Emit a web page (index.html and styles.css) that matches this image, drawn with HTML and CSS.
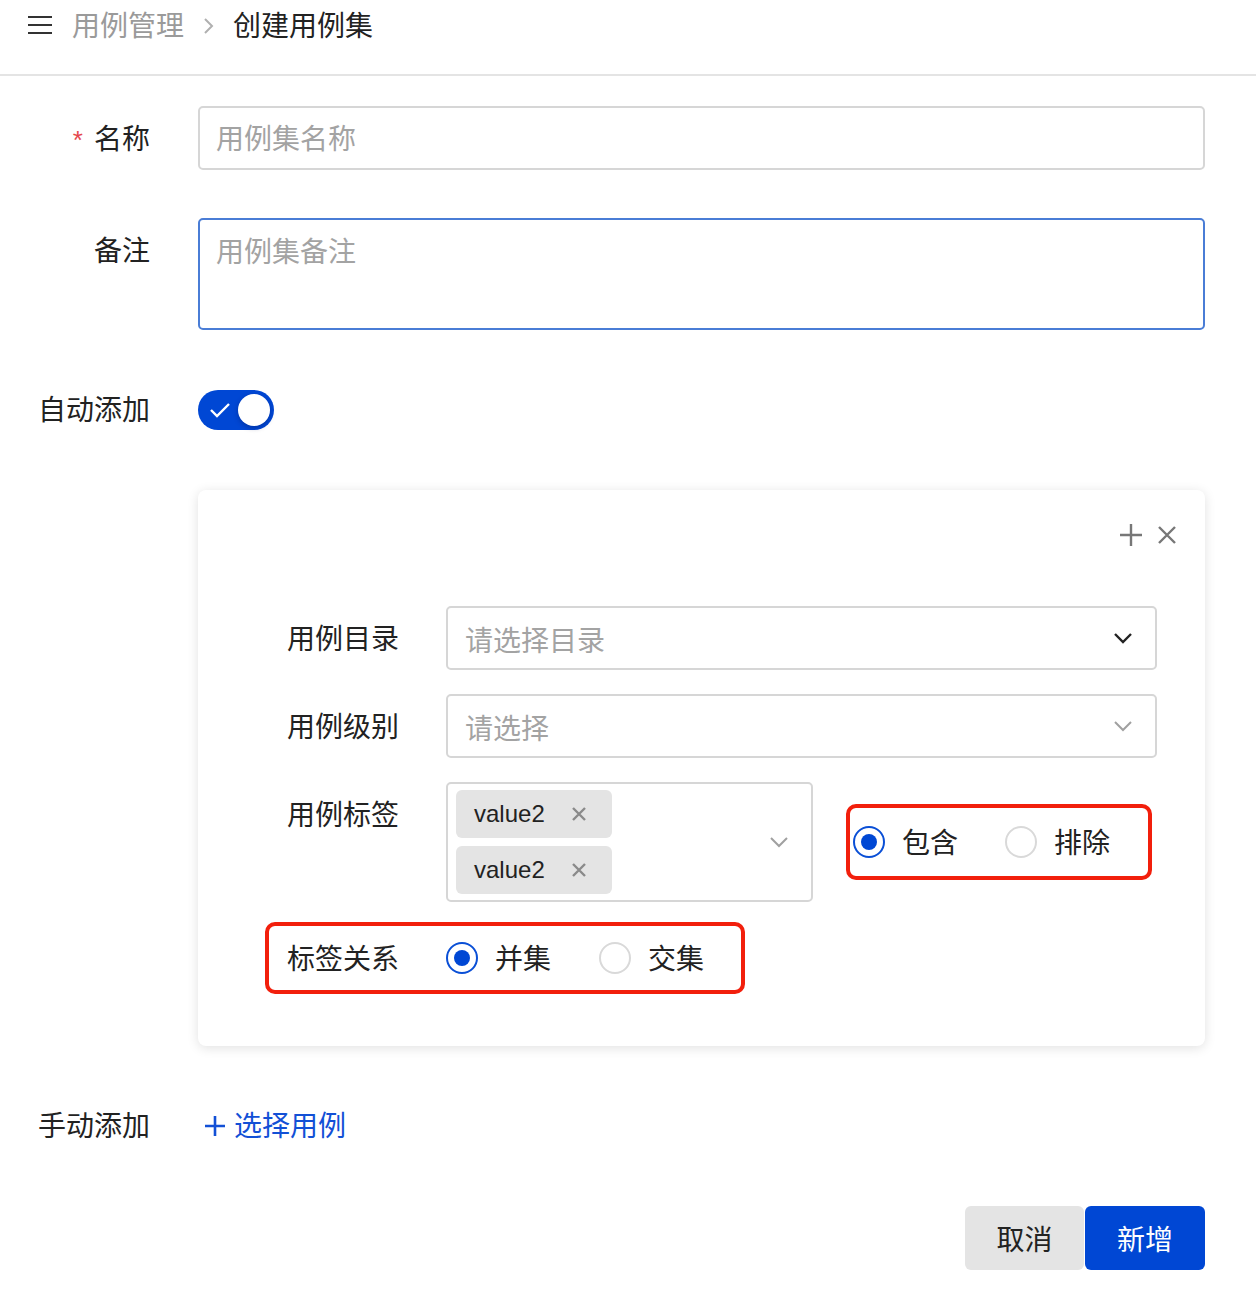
FILE: index.html
```html
<!DOCTYPE html>
<html lang="zh-CN">
<head>
<meta charset="utf-8">
<title>创建用例集</title>
<link rel="stylesheet" href="styles.css">
</head>
<body>
<header class="header">
  <svg class="menu-icon" width="24" height="20" viewBox="0 0 24 20"><path d="M0 2h24M0 10h24M0 18h24" stroke="#333" stroke-width="2" fill="none"/></svg>
  <span class="crumb">用例管理</span>
  <svg class="crumb-sep" width="12" height="18" viewBox="0 0 12 18"><path d="M2 2l7 7-7 7" stroke="#b0b0b0" stroke-width="2" fill="none"/></svg>
  <span class="crumb-current">创建用例集</span>
</header>

<main class="form">
  <div class="row row-name">
    <label class="label"><span class="req">*</span>名称</label>
    <div class="input"><span class="placeholder">用例集名称</span></div>
  </div>

  <div class="row row-note">
    <label class="label">备注</label>
    <div class="textarea"><span class="placeholder">用例集备注</span></div>
  </div>

  <div class="row row-toggle">
    <label class="label">自动添加</label>
    <div class="switch">
      <svg class="switch-check" width="22" height="16" viewBox="0 0 22 16"><path d="M2 8l6 6L20 2" stroke="#fff" stroke-width="2.4" fill="none"/></svg>
      <span class="switch-knob"></span>
    </div>
  </div>

  <div class="card-wrap">
    <section class="card">
      <div class="card-tools">
        <svg width="22" height="22" viewBox="0 0 22 22"><path d="M11 0v22M0 11h22" stroke="#777" stroke-width="2.4" fill="none"/></svg>
        <svg width="18" height="18" viewBox="0 0 18 18"><path d="M1 1l16 16M17 1L1 17" stroke="#777" stroke-width="2.4" fill="none"/></svg>
      </div>

      <div class="inner-row">
        <span class="inner-label">用例目录</span>
        <div class="select">
          <span class="placeholder">请选择目录</span>
          <svg class="chev" width="18" height="11" viewBox="0 0 18 11"><path d="M1 1l8 8 8-8" stroke="#222" stroke-width="2.4" fill="none"/></svg>
        </div>
      </div>

      <div class="inner-row">
        <span class="inner-label">用例级别</span>
        <div class="select">
          <span class="placeholder">请选择</span>
          <svg class="chev" width="18" height="11" viewBox="0 0 18 11"><path d="M1 1l8 8 8-8" stroke="#a0a0a0" stroke-width="2" fill="none"/></svg>
        </div>
      </div>

      <div class="inner-row inner-row-tags">
        <span class="inner-label">用例标签</span>
        <div class="tag-select">
          <div class="tags">
            <span class="tag">value2<svg width="14" height="14" viewBox="0 0 14 14"><path d="M1 1l12 12M13 1L1 13" stroke="#8a8a8a" stroke-width="2.4" fill="none"/></svg></span>
            <span class="tag">value2<svg width="14" height="14" viewBox="0 0 14 14"><path d="M1 1l12 12M13 1L1 13" stroke="#8a8a8a" stroke-width="2.4" fill="none"/></svg></span>
          </div>
          <svg class="chev" width="18" height="11" viewBox="0 0 18 11"><path d="M1 1l8 8 8-8" stroke="#a0a0a0" stroke-width="2" fill="none"/></svg>
        </div>
        <div class="highlight highlight-mode">
          <span class="radio-item"><span class="radio checked"></span><span class="radio-text">包含</span></span>
          <span class="radio-item"><span class="radio"></span><span class="radio-text">排除</span></span>
        </div>
      </div>

      <div class="highlight highlight-relation">
        <span class="inner-label">标签关系</span>
        <span class="radio-item"><span class="radio checked"></span><span class="radio-text">并集</span></span>
        <span class="radio-item"><span class="radio"></span><span class="radio-text">交集</span></span>
      </div>
    </section>
  </div>

  <div class="row row-manual">
    <label class="label">手动添加</label>
    <a class="link">
      <svg width="22" height="22" viewBox="0 0 22 22"><path d="M11 1v20M1 11h20" stroke="#1250d6" stroke-width="2.6" fill="none"/></svg>
      <span class="link-text">选择用例</span>
    </a>
  </div>

  <div class="footer">
    <button class="btn btn-cancel">取消</button>
    <button class="btn btn-primary">新增</button>
  </div>
</main>
</body>
</html>
```

FILE: styles.css
```css
* { box-sizing: border-box; }

body {
  margin: 0;
  background: #fff;
  color: #222;
  font-family: "Liberation Sans", "Noto Sans CJK SC", sans-serif;
  font-size: 28px;
}

.header {
  height: 76px;
  border-bottom: 2px solid #e4e4e4;
  display: flex;
  align-items: flex-start;
  padding: 5px 0 0 28px;
}
.menu-icon { margin-top: 10px; }
.crumb {
  margin-left: 20px;
  padding-top: 2px;
  line-height: 40px;
  color: #9a9a9a;
}
.crumb-sep { margin: 12px 0 0 19px; }
.crumb-current {
  margin-left: 18px;
  padding-top: 2px;
  line-height: 40px;
  color: #222;
}

.form { padding: 30px 51px 0 0; }

.row {
  display: flex;
  gap: 48px;
}
.label {
  flex: 0 0 150px;
  text-align: right;
  height: 64px;
  padding-top: 4px;
  line-height: 60px;
  white-space: nowrap;
}
.req {
  color: #e5484d;
  margin-right: 11px;
  font-size: 26px;
}

.row-name { margin-bottom: 48px; }
.row-note { margin-bottom: 60px; }
.row-toggle { align-items: center; margin-bottom: 60px; }
.row-toggle .label { height: 40px; padding-top: 2px; line-height: 38px; }

.input {
  flex: 1;
  height: 64px;
  border: 2px solid #d6d6d6;
  border-radius: 5px;
  padding: 3px 16px 0;
  line-height: 57px;
}
.textarea {
  flex: 1;
  height: 112px;
  border: 2px solid #4a7dd6;
  border-radius: 5px;
  padding: 13px 16px;
  line-height: 40px;
}
.placeholder { color: #a3a3a3; }

.switch {
  width: 76px;
  height: 40px;
  border-radius: 20px;
  background: #0047d4;
  display: flex;
  align-items: center;
  justify-content: space-between;
  padding: 0 4px 0 11px;
}
.switch-knob {
  width: 32px;
  height: 32px;
  border-radius: 50%;
  background: #fff;
  box-shadow: 0 2px 5px rgba(0, 20, 80, 0.35);
}

.card-wrap {
  padding-left: 198px;
  margin-bottom: 60px;
}
.card {
  background: #fff;
  border-radius: 8px;
  box-shadow: 0 2px 12px rgba(0, 0, 0, 0.12);
  padding: 33px 48px 52px 67px;
}
.card-tools {
  display: flex;
  justify-content: flex-end;
  align-items: center;
  gap: 16px;
  height: 24px;
  margin: 0 -19px 59px 0;
}

.inner-row {
  display: flex;
  align-items: center;
  gap: 47px;
  padding-left: 22px;
  margin-bottom: 24px;
}
.inner-label {
  flex: 0 0 112px;
  white-space: nowrap;
  height: 40px;
  padding-top: 3px;
  line-height: 37px;
}
.inner-row-tags {
  align-items: flex-start;
  margin-bottom: 20px;
}
.inner-row-tags .inner-label { margin-top: 12px; }

.select {
  flex: 1;
  height: 64px;
  border: 2px solid #d6d6d6;
  border-radius: 5px;
  padding: 0 23px 0 17px;
  display: flex;
  align-items: center;
  justify-content: space-between;
}
.select .placeholder { padding-top: 1px; }

.tag-select {
  flex: 0 0 367px;
  height: 120px;
  border: 2px solid #d6d6d6;
  border-radius: 5px;
  padding: 6px 23px 6px 8px;
  display: flex;
  align-items: center;
  justify-content: space-between;
}
.tags {
  display: flex;
  flex-direction: column;
  gap: 8px;
}
.tag {
  width: 156px;
  height: 48px;
  background: #e4e4e4;
  border-radius: 6px;
  display: flex;
  align-items: center;
  justify-content: space-between;
  padding: 0 26px 0 18px;
  font-size: 24px;
  color: #222;
}

.highlight {
  border: 4px solid #f21f0c;
  border-radius: 10px;
  display: flex;
  align-items: center;
}
.highlight-mode {
  width: 306px;
  height: 76px;
  margin: 22px 0 0 -14px;
  padding-left: 3px;
  gap: 47px;
}
.highlight-relation {
  width: 480px;
  height: 72px;
  padding-left: 18px;
  gap: 48px;
}
.highlight-relation .inner-label { margin-right: -1px; }

.radio-item {
  display: flex;
  align-items: center;
  gap: 17px;
  white-space: nowrap;
}
.radio-text {
  height: 40px;
  padding-top: 3px;
  line-height: 37px;
}
.radio {
  width: 32px;
  height: 32px;
  border-radius: 50%;
  border: 2px solid #d9d9d9;
  display: flex;
  align-items: center;
  justify-content: center;
  background: #fff;
}
.radio.checked { border-color: #0a4fd6; }
.radio.checked::after {
  content: "";
  width: 16px;
  height: 16px;
  border-radius: 50%;
  background: #0047d4;
}

.row-manual {
  align-items: center;
  margin-bottom: 60px;
}
.row-manual .label { height: 40px; padding-top: 2px; line-height: 38px; }
.link {
  display: flex;
  align-items: center;
  gap: 8px;
  color: #1250d6;
  padding-left: 6px;
  cursor: pointer;
}
.link-text {
  height: 40px;
  padding-top: 2px;
  line-height: 38px;
}

.footer {
  display: flex;
  justify-content: flex-end;
  gap: 1px;
}
.btn {
  height: 64px;
  border: none;
  border-radius: 6px;
  font-family: inherit;
  font-size: 28px;
  padding: 0;
}
.btn-cancel {
  width: 119px;
  background: #e4e4e4;
  color: #222;
}
.btn-primary {
  width: 120px;
  background: #0047d4;
  color: #fff;
}
```
